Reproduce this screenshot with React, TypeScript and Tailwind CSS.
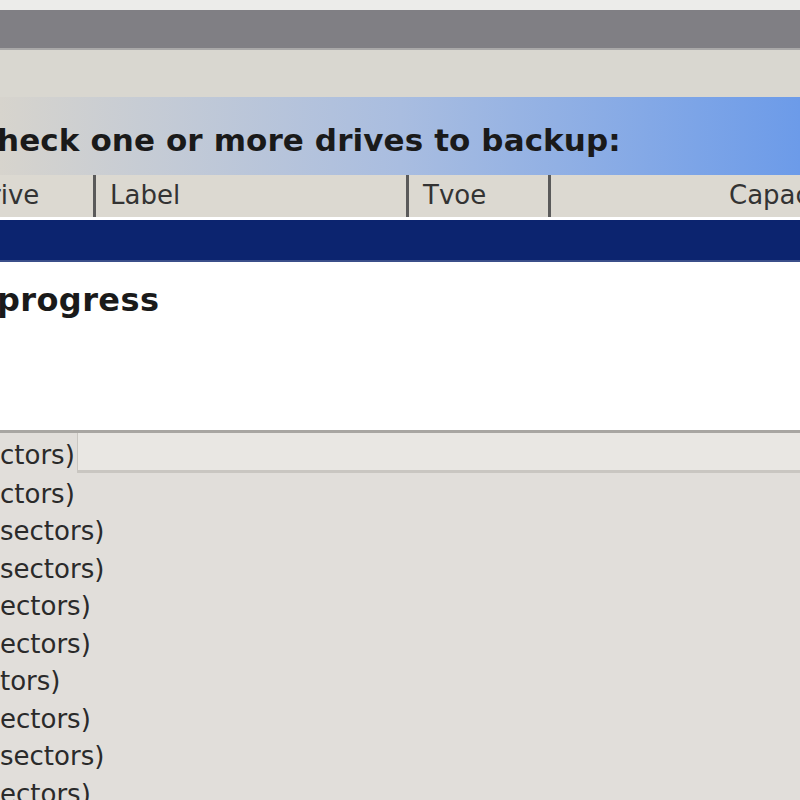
const rows = [
  "ctors)",
  "sectors)",
  "sectors)",
  "ectors)",
  "ectors)",
  "tors)",
  "ectors)",
  "sectors)",
  "ectors)",
];

const App = () => {
  return (
    <div className="w-[800px] h-[800px] overflow-hidden bg-[#e1deda] font-['DejaVu_Sans',sans-serif] text-[#1a1a1a]">
      <div className="h-[10px] bg-[#ececea]"></div>
      <div className="h-[40px] bg-[#807f84] border-b-2 border-[#a9a8a8]"></div>
      <div className="h-[47px] bg-[#d9d7d0]"></div>

      {/* banner */}
      <div className="h-[78px] flex items-center bg-gradient-to-r from-[#d7d4cd] via-[#a9bde0] to-[#6c9be9] overflow-hidden">
        <span className="text-[31px] font-bold tracking-[0.1px] whitespace-nowrap pt-[8px] ml-[-3px]">
          heck one or more drives to backup:
        </span>
      </div>

      {/* column headers */}
      <div className="h-[45px] flex items-end bg-[#dcd9d1] border-b-[3px] border-white text-[26px] text-[#333] whitespace-nowrap">
        <div className="w-[96px] h-full flex items-end pb-[2px] border-r-[3px] border-[#5a5a5a] overflow-hidden">
          <span className="ml-[-10px]">rive</span>
        </div>
        <div className="w-[313px] h-full flex items-end pb-[2px] pl-[14px] border-r-[3px] border-[#5a5a5a]">Label</div>
        <div className="w-[142px] h-full flex items-end pb-[2px] pl-[14px] border-r-[3px] border-[#5a5a5a]">Tvoe</div>
        <div className="flex-1 h-full flex items-end pb-[2px] pl-[178px] overflow-hidden">
          <span>Capacity</span>
        </div>
      </div>

      {/* selected row */}
      <div className="h-[42px] bg-[#0c246f] border-b-2 border-[#3b4f8a]"></div>

      {/* white panel */}
      <div className="h-[168px] bg-white pt-[22px]">
        <div className="text-[32px] font-bold leading-none ml-[-3px] tracking-[0.4px]">progress</div>
      </div>

      {/* list */}
      <div className="border-t-[3px] border-[#a8a6a2]">
        <div className="h-[40px] flex items-center">
          <span className="text-[26px] text-[#2a2a2a] leading-none pt-[4px]">ctors)</span>
          <div className="flex-1 h-full ml-[2px] bg-[#e9e7e3] border-b-[3px] border-[#9e9c98] border-l border-[#c9c6c1]"></div>
        </div>
        {rows.map((t, i) => (
          <div key={i} className="h-[37.5px] flex items-center">
            <span className="text-[26px] text-[#2a2a2a] leading-none pt-[4px]">{t}</span>
          </div>
        ))}
      </div>
    </div>
  );
};

export default App;
